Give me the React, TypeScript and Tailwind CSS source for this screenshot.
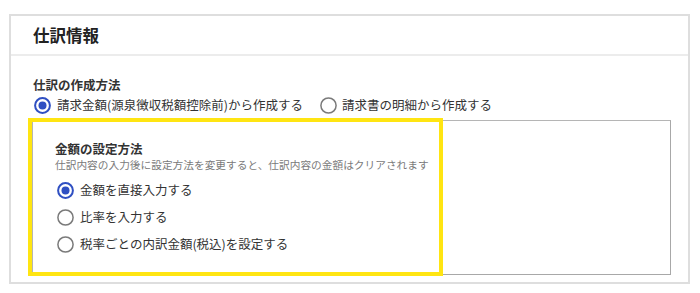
import React from "react";

function Radio({ checked }: { checked?: boolean }) {
  return (
    <svg width="17" height="17" viewBox="0 0 17 17" className="shrink-0">
      {checked ? (
        <>
          <circle cx="8.5" cy="8.5" r="7.4" fill="white" stroke="#2f4fc2" strokeWidth="2" />
          <circle cx="8.5" cy="8.5" r="4" fill="#2f4fc2" />
        </>
      ) : (
        <circle cx="8.5" cy="8.5" r="7.6" fill="white" stroke="#7a7a7a" strokeWidth="1.5" />
      )}
    </svg>
  );
}

export default function App() {
  return (
    <div
      className="w-[700px] h-[293px] bg-white pt-[14px] pl-[9px] text-[#333]"
      style={{ fontFamily: '"Noto Sans CJK JP", "Noto Sans", sans-serif' }}
    >
      <div className="w-[681px] h-[270px] border-2 border-[#dedede] bg-white">
        <div className="h-[40px] flex items-center pl-[22px] border-b-2 border-[#ececec]">
          <span className="text-[16.5px] font-bold text-[#222] leading-none">仕訳情報</span>
        </div>
        <div className="pl-[22px] pt-[20px]">
          <div className="text-[12.5px] font-semibold leading-[18px] text-[#333]">仕訳の作成方法</div>
          <div className="flex items-center h-[22px] text-[12.5px] text-[#333]">
            <div className="flex items-center gap-[6px] ml-[1px]">
              <Radio checked />
              <span>請求金額(源泉徴収税額控除前)から作成する</span>
            </div>
            <div className="flex items-center gap-[5px] ml-[17px]">
              <Radio />
              <span>請求書の明細から作成する</span>
            </div>
          </div>
          <div className="relative mt-[4px] -ml-[1px] w-[639px] h-[155px] border border-[#b5b5b5] border-r-[#a8a8a8] border-b-[#a8a8a8]">
            <div className="pl-[22px] pt-[19px]">
              <div className="text-[12.5px] font-bold leading-[18px] text-[#333]">金額の設定方法</div>
              <div className="text-[10.7px] leading-[14px] text-[#7a7a7a]">
                仕訳内容の入力後に設定方法を変更すると、仕訳内容の金額はクリアされます
              </div>
              <div className="mt-[5px] flex flex-col text-[12.5px] text-[#333]">
                <div className="h-[27px] flex items-center gap-[6px] ml-[2px]">
                  <Radio checked />
                  <span>金額を直接入力する</span>
                </div>
                <div className="h-[27px] flex items-center gap-[6px] ml-[2px]">
                  <Radio />
                  <span>比率を入力する</span>
                </div>
                <div className="h-[27px] flex items-center gap-[6px] ml-[2px]">
                  <Radio />
                  <span>税率ごとの内訳金額(税込)を設定する</span>
                </div>
              </div>
            </div>
            <div className="absolute left-[-5px] top-[-3px] w-[415px] h-[158px] border-[4px] border-[#ffe512]" />
          </div>
        </div>
      </div>
    </div>
  );
}
